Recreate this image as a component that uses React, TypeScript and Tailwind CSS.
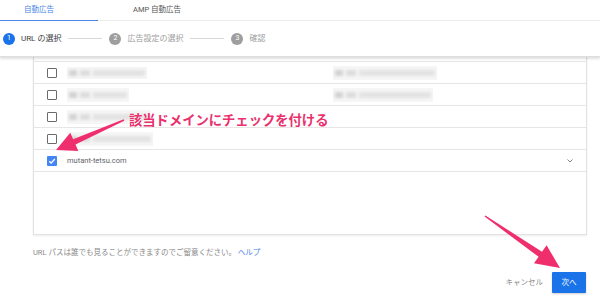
import React from "react";

const font = "font-['Roboto','Noto_Sans_CJK_JP',sans-serif]";

const Blur = ({ w, h, className = "" }: { w: string; h: string; className?: string }) => (
  <div className={`${w} ${h} bg-[#f6f6f6] flex flex-col justify-center px-[2px] ${className}`}>
    <div className="flex gap-[3px] blur-[1.5px]">
      <div className="w-[8px] h-[6px] bg-[#d2d2d2]" />
      <div className="w-[10px] h-[6px] bg-[#dcdcdc]" />
      <div className="flex-1 h-[6px] bg-[#e2e2e2]" />
    </div>
  </div>
);

const Checkbox = ({ checked = false }: { checked?: boolean }) =>
  checked ? (
    <div className="w-[10px] h-[10px] rounded-[1px] bg-[#4285f4] flex items-center justify-center">
      <svg width="8" height="8" viewBox="0 0 8 8">
        <path d="M1.2 4.2 L3.2 6 L6.8 2" stroke="white" strokeWidth="1.3" fill="none" />
      </svg>
    </div>
  ) : (
    <div className="w-[10px] h-[10px] rounded-[1px] border-[1.5px] border-[#6b6b6b]" />
  );

const Row = ({ children }: { children: React.ReactNode }) => (
  <div className="h-[22px] border-t border-[#e6e6e6] flex items-center pl-[13px] pr-[12px]">{children}</div>
);

const Step = ({ n, label, active = false }: { n: number; label: string; active?: boolean }) => (
  <div className="flex items-center gap-[6px]">
    <div
      className={`w-[12px] h-[12px] rounded-full flex items-center justify-center text-white text-[7px] ${
        active ? "bg-[#1a73e8]" : "bg-[#9e9e9e]"
      }`}
    >
      {n}
    </div>
    <span className={`text-[8px] ${active ? "text-[#3c4043]" : "text-[#a0a0a0]"}`}>{label}</span>
  </div>
);

export default function App() {
  return (
    <div className={`w-[600px] h-[300px] bg-white relative overflow-hidden ${font}`}>
      {/* tabs */}
      <div className="h-[21px] border-b border-[#ebebeb] flex">
        <div className="w-[98px] relative flex items-center pl-[24px] text-[7.5px] text-[#4a86e8]">
          自動広告
          <span className="absolute left-0 right-0 bottom-[-1px] h-[1.5px] bg-[#4a86e8]" />
        </div>
        <div className="flex items-center pl-[35px] text-[7.5px] text-[#555]">AMP 自動広告</div>
      </div>

      {/* stepper */}
      <div className="h-[36px] flex items-center pl-[3px] gap-[5px] relative z-10 shadow-[0_2px_2px_rgba(0,0,0,0.12)] border-b border-[#dedede]">
        <Step n={1} label="URL の選択" active />
        <div className="w-[34px] h-px bg-[#d8d8d8] mx-[2px]" />
        <Step n={2} label="広告設定の選択" />
        <div className="w-[34px] h-px bg-[#d8d8d8] mx-[2px]" />
        <Step n={3} label="確認" />
      </div>

      {/* panel */}
      <div className="pl-[33px]">
        <div className="w-[554px] h-[178px] border-x border-b border-[#e2e2e2] shadow-[0_1px_2px_rgba(0,0,0,0.08)]">
          <div className="h-[4px]" />
          <Row>
            <Checkbox />
            <Blur w="w-[80px]" h="h-[12px]" className="ml-[10px]" />
            <Blur w="w-[104px]" h="h-[14px]" className="ml-[186px]" />
          </Row>
          <Row>
            <Checkbox />
            <Blur w="w-[62px]" h="h-[14px]" className="ml-[10px]" />
            <Blur w="w-[100px]" h="h-[14px]" className="ml-[204px]" />
          </Row>
          <Row>
            <Checkbox />
            <Blur w="w-[84px]" h="h-[14px]" className="ml-[10px]" />
          </Row>
          <Row>
            <Checkbox />
            <Blur w="w-[86px]" h="h-[14px]" className="ml-[10px]" />
          </Row>
          <Row>
            <Checkbox checked />
            <span className="ml-[10px] text-[7.5px] text-[#5f6368]">mutant-tetsu.com</span>
            <svg className="ml-auto" width="8" height="6" viewBox="0 0 8 6">
              <path d="M1.5 1.5 L4 4 L6.5 1.5" stroke="#777" strokeWidth="0.9" fill="none" />
            </svg>
          </Row>
          <div className="border-t border-[#e6e6e6]" />
        </div>
      </div>

      {/* footer */}
      <div className="pl-[33px] mt-[13px] text-[7.5px] text-[#8a8a8a] leading-[10px]">
        URL パスは誰でも見ることができますのでご留意ください。 <span className="text-[#4a86e8]">ヘルプ</span>
      </div>
      <div className="flex justify-end items-center pr-[14px] mt-[14px] gap-[9px]">
        <span className="text-[7.5px] text-[#8a8a8a]">キャンセル</span>
        <div className="w-[34px] h-[21px] bg-[#1a73e8] rounded-[1px] flex items-center justify-center text-white text-[7.5px] shadow-[0_1px_2px_rgba(0,0,0,0.2)]">
          次へ
        </div>
      </div>

      {/* annotation */}
      <div className="absolute left-[129px] top-[110px] text-[13.3px] leading-[20px] font-bold text-[#e9306c] font-['Noto_Sans_CJK_JP',sans-serif] [text-shadow:0_0_2px_white]">
        該当ドメインにチェックを付ける
      </div>
      <svg className="absolute inset-0 pointer-events-none" width="600" height="300" viewBox="0 0 600 300">
        <polygon
          points="123.7,119.3 73.1,139.2 70.3,132.8 56,150 78.3,151 75.5,144.6 124.3,120.7"
          fill="#ef2f6d"
        />
        <polygon
          points="485.4,215.4 542,251.8 546.6,245.3 560,268 534,263.3 538.6,256.8 484.6,216.6"
          fill="#ef2f6d"
        />
      </svg>
    </div>
  );
}
